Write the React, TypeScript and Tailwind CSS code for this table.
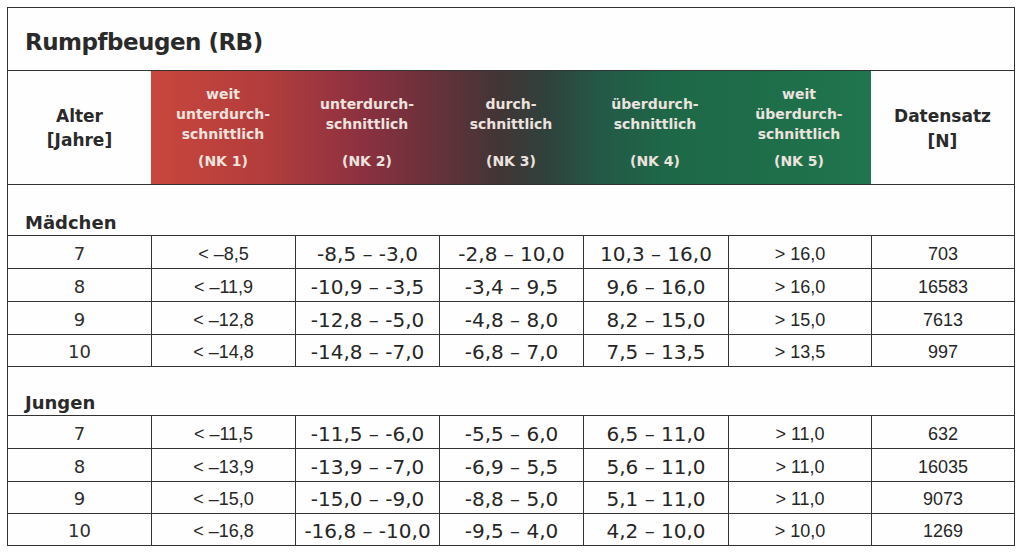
const gothic = "font-['DejaVu_Sans',sans-serif]"
const arial = "font-['Liberation_Sans',Arial,sans-serif]"

type Row = { h: string; cells: string[] }

const girls: Row[] = [
  { h: "h-[33px]", cells: ["7", "< –8,5", "-8,5 – -3,0", "-2,8 – 10,0", "10,3 – 16,0", "> 16,0", "703"] },
  { h: "h-[33px]", cells: ["8", "< –11,9", "-10,9 – -3,5", "-3,4 – 9,5", "9,6 – 16,0", "> 16,0", "16583"] },
  { h: "h-[33px]", cells: ["9", "< –12,8", "-12,8 – -5,0", "-4,8 – 8,0", "8,2 – 15,0", "> 15,0", "7613"] },
  { h: "h-[32px]", cells: ["10", "< –14,8", "-14,8 – -7,0", "-6,8 – 7,0", "7,5 – 13,5", "> 13,5", "997"] },
]

const boys: Row[] = [
  { h: "h-[33px]", cells: ["7", "< –11,5", "-11,5 – -6,0", "-5,5 – 6,0", "6,5 – 11,0", "> 11,0", "632"] },
  { h: "h-[33px]", cells: ["8", "< –13,9", "-13,9 – -7,0", "-6,9 – 5,5", "5,6 – 11,0", "> 11,0", "16035"] },
  { h: "h-[32px]", cells: ["9", "< –15,0", "-15,0 – -9,0", "-8,8 – 5,0", "5,1 – 11,0", "> 11,0", "9073"] },
  { h: "h-[32px]", cells: ["10", "< –16,8", "-16,8 – -10,0", "-9,5 – 4,0", "4,2 – 10,0", "> 10,0", "1269"] },
]

const levels = [
  { lines: ["weit", "unterdurch-", "schnittlich"], nk: "(NK 1)" },
  { lines: ["unterdurch-", "schnittlich"], nk: "(NK 2)" },
  { lines: ["durch-", "schnittlich"], nk: "(NK 3)" },
  { lines: ["überdurch-", "schnittlich"], nk: "(NK 4)" },
  { lines: ["weit", "überdurch-", "schnittlich"], nk: "(NK 5)" },
]

// column fonts: ranges in gothic, bounds and counts in arial
function cellFont(i: number) {
  if (i === 0) return `${gothic} text-[18px] text-[#2e2e2e]`
  if (i === 1 || i === 5 || i === 6) return `${arial} text-[18px] text-[#262626]`
  return `${gothic} text-[20px] text-[#262626]`
}

function DataRow({ row }: { row: Row }) {
  return (
    <div className={`grid grid-cols-[144px_144px_144px_144px_145px_143px_1fr] border-t border-[#333] ${row.h}`}>
      {row.cells.map((c, i) => (
        <div
          key={i}
          className={`flex items-center justify-center pt-[3px] leading-none ${cellFont(i)} ${i < 6 ? "border-r border-[#333]" : ""}`}
        >
          {c}
        </div>
      ))}
    </div>
  )
}

export default function App() {
  return (
    <main className="min-h-screen bg-white p-[7px]">
      <div className="w-[1008px] border border-[#333] bg-[#fefefe]">
        <div className={`flex h-[63px] items-center border-b border-[#333] pl-[17px] pt-[6px] text-[23px] font-bold tracking-[-0.5px] text-[#2a2a2a] ${gothic}`}>
          Rumpfbeugen (RB)
        </div>

        <div className={`flex h-[114px] border-b border-[#333] ${gothic}`}>
          <div className="flex w-[143px] items-center justify-center text-center text-[17px] font-bold leading-[24px] text-[#2a2a2a]">
            Alter
            <br />
            [Jahre]
          </div>
          <div className="flex w-[720px] bg-[linear-gradient(to_right,#c9463d_0%,#b23d3c_16%,#8a3040_30%,#65323a_40%,#433536_48%,#2f413c_55%,#245846_62%,#1e6848_72%,#1e6e4a_86%,#20754e_100%)]">
            {levels.map((l) => (
              <div key={l.nk} className="flex w-[144px] flex-col items-center pt-[6px] text-center text-[14px] font-bold leading-[20px] text-[#ece3df]">
                <div className="flex h-[74px] flex-col justify-center">
                  {l.lines.map((t) => (
                    <span key={t}>{t}</span>
                  ))}
                </div>
                <div>{l.nk}</div>
              </div>
            ))}
          </div>
          <div className="flex flex-1 items-center justify-center pt-[3px] text-center text-[17px] font-bold leading-[25px] text-[#2a2a2a]">
            Datensatz
            <br />
            [N]
          </div>
        </div>

        <div className={`flex h-[50px] items-end pb-[1px] pl-[17px] text-[18px] font-bold leading-[22px] text-[#2a2a2a] ${gothic}`}>
          Mädchen
        </div>
        {girls.map((r) => (
          <DataRow key={"g" + r.cells[0]} row={r} />
        ))}

        <div className={`flex h-[49px] items-end border-t border-[#333] pb-[1px] pl-[17px] text-[18px] font-bold leading-[22px] text-[#2a2a2a] ${gothic}`}>
          Jungen
        </div>
        {boys.map((r) => (
          <DataRow key={"b" + r.cells[0]} row={r} />
        ))}
      </div>
    </main>
  )
}
